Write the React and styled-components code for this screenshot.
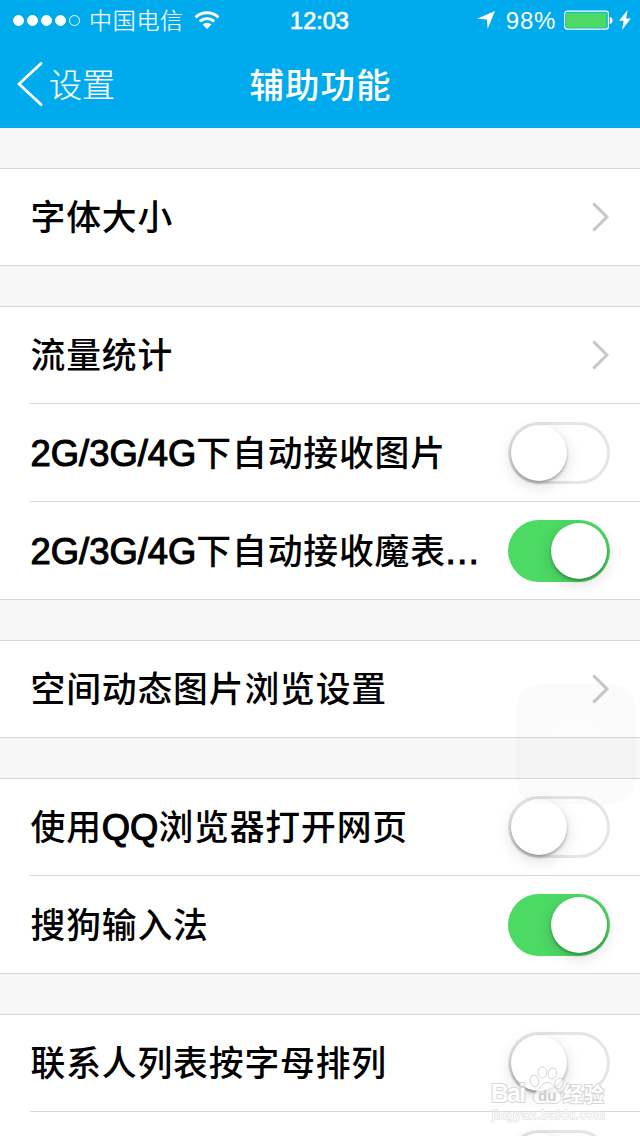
import React, { useState } from 'react';
import styled, { createGlobalStyle } from 'styled-components';

const groups = [
  [{ label: '字体大小' }],
  [
    { label: '流量统计' },
    { latin: '2G/3G/4G', label: '下自动接收图片', on: false },
    { latin: '2G/3G/4G', label: '下自动接收魔表', more: true, on: true },
  ],
  [{ label: '空间动态图片浏览设置' }],
  [
    { before: '使用', latin: 'QQ', label: '浏览器打开网页', on: false },
    { label: '搜狗输入法', on: true },
  ],
  [
    { label: '联系人列表按字母排列', on: false },
    { label: '', on: false },
  ],
];

const SettingRow = ({ item }) => {
  const [on, setOn] = useState(item.on);

  return (
    <Row>
      <Label>
        {item.before}
        {item.latin && <Latin>{item.latin}</Latin>}
        {item.label}
        {item.more && <Ellipsis>…</Ellipsis>}
      </Label>
      {item.on === undefined ? (
        <Chevron />
      ) : (
        <Switch role="switch" aria-checked={on} $on={on} onClick={() => setOn(!on)}>
          <Knob />
        </Switch>
      )}
    </Row>
  );
};

const Chevron = () => (
  <ChevronIcon viewBox="0 0 18 30">
    <path d="M2.2 2.4 14.9 15 2.2 27.6" fill="none" stroke="#c7c7cc" strokeWidth="3" strokeLinecap="round" />
  </ChevronIcon>
);

const StatusIcons = () => (
  <StatusRight>
    <svg width="18" height="18" viewBox="0 0 18 18">
      <path d="M18 0 10.6 18 10 8.5 0 7.8Z" fill="#fff" />
    </svg>
    <Percent>98%</Percent>
    <svg width="50" height="20" viewBox="0 0 50 20">
      <rect x="0.6" y="1.2" width="43.8" height="18" rx="2.6" fill="none" stroke="#fff" strokeWidth="1.2" />
      <rect x="2" y="2.7" width="40.5" height="15" rx="0.8" fill="#4cd964" />
      <path d="M45.8 7c3.8.7 3.8 6.4 0 7Z" fill="#fff" />
    </svg>
    <Bolt viewBox="0 0 12 20">
      <path d="M8.6 0 0 10.8h4.6L3 20l8.8-11.6H7.2Z" fill="#fff" />
    </Bolt>
  </StatusRight>
);

const Watermark = () => (
  <WatermarkIcon viewBox="0 0 120 62">
    <g fill="#fff" fillOpacity="0.7" stroke="#d2d2d2" strokeOpacity="0.9" strokeWidth="1">
      <ellipse cx="44.5" cy="17" rx="4.2" ry="5.8" transform="rotate(-12 44.5 17)" />
      <ellipse cx="52.3" cy="8.5" rx="4.2" ry="5.6" />
      <ellipse cx="62.3" cy="9.5" rx="4.2" ry="5.6" transform="rotate(10 62.3 9.5)" />
      <ellipse cx="69" cy="19.5" rx="4.2" ry="5.4" transform="rotate(22 69 19.5)" />
      <path d="M57 18.5c-5 0-6 5-9.5 8-6 5-6 12.5 2 13 5 0 9-1 14 0 8 1 10-7 5-12-4-4-6-9-11.5-9Z" />
    </g>
    <WatermarkText x="1" y="38" $size={25} textLength="35">Bai</WatermarkText>
    <WatermarkText x="48" y="36.5" $size={15} $dark>du</WatermarkText>
    <WatermarkText x="73" y="37.5" $size={20} textLength="41">经验</WatermarkText>
    <WatermarkText x="2" y="54.8" $size={12.5} $thin textLength="113">jingyan.baidu.com</WatermarkText>
  </WatermarkIcon>
);

const App = () => (
  <Screen>
    <GlobalStyle />
    <Header>
      <StatusBar>
        <StatusLeft>
          <Dots>
            <Dot $filled />
            <Dot $filled />
            <Dot $filled />
            <Dot $filled />
            <Dot />
          </Dots>
          <Carrier>中国电信</Carrier>
          <svg width="26" height="18" viewBox="0 0 26 18">
            <path d="M1.6 6.4a16.4 16.4 0 0 1 22.8 0" fill="none" stroke="#fff" strokeWidth="3" />
            <path d="M5.8 10.6a10.4 10.4 0 0 1 14.4 0" fill="none" stroke="#fff" strokeWidth="2.8" />
            <path d="M13 18 8.6 13.6a6.3 6.3 0 0 1 8.8 0Z" fill="#fff" />
          </svg>
        </StatusLeft>
        <Time>12:03</Time>
        <StatusIcons />
      </StatusBar>
      <NavBar>
        <BackButton>
          <svg width="26" height="44" viewBox="0 0 26 44">
            <path d="M24 1.5 2 22l22 20.5" fill="none" stroke="#fff" strokeWidth="2.8" strokeLinecap="round" />
          </svg>
          <span>设置</span>
        </BackButton>
        <Title>辅助功能</Title>
      </NavBar>
    </Header>
    <List>
      {groups.map((items, i) => (
        <Group key={i}>
          {items.map((item, j) => (
            <SettingRow key={j} item={item} />
          ))}
        </Group>
      ))}
    </List>
    <AssistiveTouch />
    <Watermark />
  </Screen>
);

const GlobalStyle = createGlobalStyle`
  * {
    box-sizing: border-box;
  }

  body {
    margin: 0;
    overflow: hidden;
  }
`;

const Screen = styled.div`
  position: relative;
  width: 640px;
  height: 1136px;
  overflow: hidden;
  background: #f7f7f7;
  color: #000;
  font-family: 'Liberation Sans', 'Noto Sans CJK SC', sans-serif;
`;

const Header = styled.header`
  height: 128px;
  background: #00abed;
  color: #fff;
`;

const StatusBar = styled.div`
  display: grid;
  grid-template-columns: 1fr auto 1fr;
  align-items: center;
  height: 40px;
  padding: 0 9px 0 13px;
  font-size: 24px;
  line-height: 38px;
`;

const StatusLeft = styled.div`
  display: flex;
  align-items: center;
`;

const Dots = styled.div`
  display: flex;
  gap: 3px;
  margin-right: 9px;
`;

const Dot = styled.i`
  width: 11px;
  height: 11px;
  border: 1px solid #fff;
  border-radius: 50%;
  background: ${({ $filled }) => ($filled ? '#fff' : 'transparent')};
`;

const Carrier = styled.span`
  margin-right: 10px;
  padding-top: 2px;
  font-weight: 300;
  font-size: 23px;
  letter-spacing: 0.7px;
  -webkit-text-stroke: 0.2px #fff;
`;

const Time = styled.span`
  margin-right: 5px;
  padding-top: 2px;
  font-size: 23.5px;
  -webkit-text-stroke: 0.7px #fff;
`;

const StatusRight = styled.div`
  display: flex;
  justify-content: flex-end;
  align-items: center;
`;

const Percent = styled.span`
  margin: 0 8px 0 11px;
  padding-top: 2px;
  letter-spacing: 0.7px;
`;

const Bolt = styled.svg`
  width: 12px;
  height: 20px;
  margin-left: 5px;
`;

const NavBar = styled.div`
  display: grid;
  grid-template-columns: 1fr auto 1fr;
  align-items: center;
  height: 88px;
  padding: 0 17px 1px;
`;

const BackButton = styled.div`
  display: flex;
  align-items: center;
  gap: 6px;
  font-size: 33px;
  font-weight: 300;
  line-height: 44px;

  span {
    padding-top: 4px;
    -webkit-text-stroke: 0.2px #fff;
  }
`;

const Title = styled.h1`
  margin: 0;
  padding: 4px 0 0 1px;
  font-size: 34.5px;
  font-weight: 500;
  line-height: 44px;
  letter-spacing: 1px;
`;

const List = styled.main`
  display: flex;
  flex-direction: column;
  gap: 40px;
  padding-top: 40px;
`;

const Group = styled.section`
  border-top: 1px solid #d9d9d9;
  border-bottom: 1px solid #d9d9d9;
  background: #fff;
`;

const Row = styled.div`
  display: flex;
  align-items: center;
  justify-content: space-between;
  height: 96px;
  margin-left: 30px;
  padding-right: 30px;

  & + & {
    height: 98px;
    padding-top: 1px;
    border-top: 1px solid #d9d9d9;
  }
`;

const Label = styled.span`
  padding: 1px 0 0 0.5px;
  font-size: 34.8px;
  font-weight: 500;
  line-height: 50px;
  letter-spacing: 0.85px;
  white-space: nowrap;
`;

const Latin = styled.span`
  font-size: 36.4px;
  letter-spacing: 0;
  -webkit-text-stroke: 1.1px #000;
`;

const Ellipsis = styled(Latin)`
  margin-left: -2px;
`;

const ChevronIcon = styled.svg`
  width: 18px;
  height: 30px;
`;

const Switch = styled.button`
  display: flex;
  justify-content: ${({ $on }) => ($on ? 'flex-end' : 'flex-start')};
  flex: none;
  width: 102px;
  height: 62px;
  padding: 3px;
  border: none;
  border-radius: 31px;
  background: ${({ $on }) => ($on ? '#4cd964' : '#fff')};
  box-shadow: ${({ $on }) => ($on ? 'none' : 'inset 0 0 0 3px #e5e5e5')};
`;

const Knob = styled.span`
  width: 56px;
  height: 56px;
  border-radius: 50%;
  background: #fff;
  box-shadow: 0 2px 3px rgba(0, 0, 0, 0.3), 0 5px 16px rgba(0, 0, 0, 0.14);
`;

const AssistiveTouch = styled.div`
  position: absolute;
  top: 684px;
  left: 516px;
  width: 120px;
  height: 120px;
  border-radius: 24px;
  background: radial-gradient(circle, rgba(0, 0, 0, 0.012) 26px, rgba(0, 0, 0, 0.014) 28px);
  pointer-events: none;
`;

const WatermarkIcon = styled.svg`
  position: absolute;
  top: 1064px;
  left: 490px;
  width: 120px;
  height: 62px;
  pointer-events: none;
`;

const WatermarkText = styled.text`
  font-size: ${({ $size }) => $size}px;
  font-weight: ${({ $thin }) => ($thin ? 400 : 700)};
  fill: ${({ $dark }) => ($dark ? '#cdcdcd' : '#fff')};
  stroke: ${({ $thin }) => ($thin ? '#e2e2e2' : '#d6d6d6')};
  stroke-width: ${({ $thin, $dark }) => ($dark ? 0 : $thin ? 1.4 : 2)}px;
  paint-order: stroke;
`;

export default App;
